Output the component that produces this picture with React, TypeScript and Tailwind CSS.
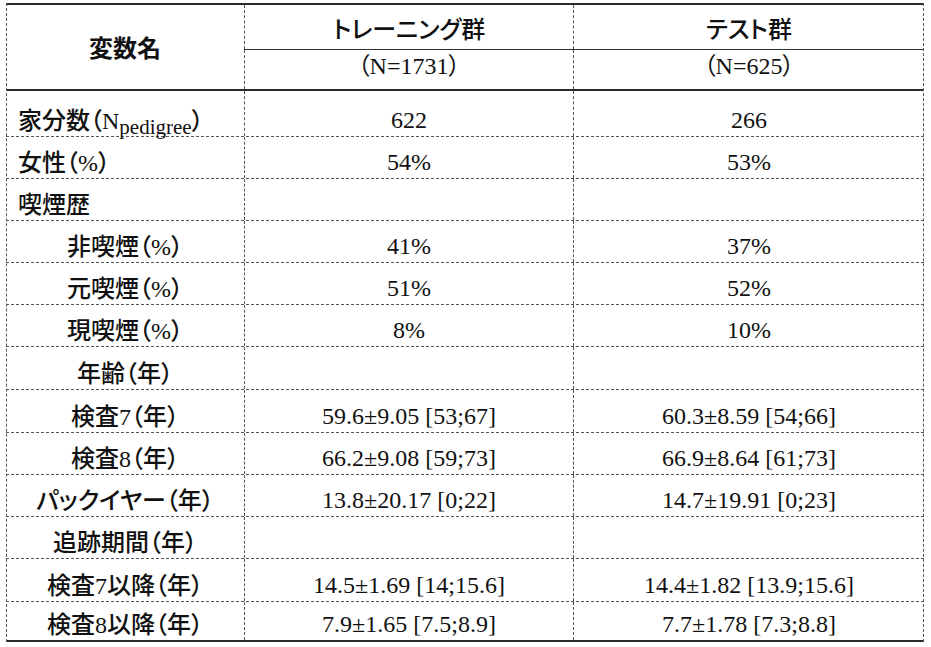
import React from 'react';

type Row = {
  label: React.ReactNode;
  train: string;
  test: string;
  center?: boolean;
  h: string;
};

const rows: Row[] = [
  { label: <>家分数（N<sub className="text-[21px]">pedigree</sub>）</>, train: '622', test: '266', h: 'h-[45px]' },
  { label: '女性（%）', train: '54%', test: '53%', h: 'h-[42px]' },
  { label: '喫煙歴', train: '', test: '', h: 'h-[42px]' },
  { label: '非喫煙（%）', train: '41%', test: '37%', center: true, h: 'h-[42px]' },
  { label: '元喫煙（%）', train: '51%', test: '52%', center: true, h: 'h-[42px]' },
  { label: '現喫煙（%）', train: '8%', test: '10%', center: true, h: 'h-[42px]' },
  { label: '年齢（年）', train: '', test: '', center: true, h: 'h-[43px]' },
  { label: '検査7（年）', train: '59.6±9.05 [53;67]', test: '60.3±8.59 [54;66]', center: true, h: 'h-[43px]' },
  { label: '検査8（年）', train: '66.2±9.08 [59;73]', test: '66.9±8.64 [61;73]', center: true, h: 'h-[42px]' },
  { label: 'パックイヤー（年）', train: '13.8±20.17 [0;22]', test: '14.7±19.91 [0;23]', center: true, h: 'h-[42px]' },
  { label: '追跡期間（年）', train: '', test: '', center: true, h: 'h-[42px]' },
  { label: '検査7以降（年）', train: '14.5±1.69 [14;15.6]', test: '14.4±1.82 [13.9;15.6]', center: true, h: 'h-[43px]' },
  { label: '検査8以降（年）', train: '7.9±1.65 [7.5;8.9]', test: '7.7±1.78 [7.3;8.8]', center: true, h: 'h-[39px]' },
];

const App: React.FC = () => {
  return (
    <div
      className="w-[931px] h-[647px] bg-white pt-[3px] pl-[6px] text-[#111] text-[24px] leading-none [font-feature-settings:'palt']"
      style={{ fontFamily: '"Liberation Serif", "Noto Sans CJK JP", serif' }}
    >
      <div className="w-[918px] border-t-2 border-b-2 border-[#2a2a2a] relative">
        {/* dashed outer sides */}
        <div className="absolute -top-[2px] -bottom-[2px] left-0 border-l border-dashed border-[#555]" />
        <div className="absolute -top-[2px] -bottom-[2px] right-0 border-r border-dashed border-[#555]" />

        {/* header */}
        <div className="flex border-b-2 border-[#2a2a2a]">
          <div className="w-[238px] h-[84px] flex items-center justify-center pt-[4px] font-bold">変数名</div>
          <div className="flex-1 flex flex-col">
            <div className="grid grid-cols-[329px_1fr] h-[44px]">
              <div className="border-l border-dashed border-[#555] flex items-end justify-center pb-[7px] font-medium">トレーニング群</div>
              <div className="border-l border-dashed border-[#555] flex items-end justify-center pb-[7px] font-medium">テスト群</div>
            </div>
            <div className="grid grid-cols-[329px_1fr] h-[40px] border-t-[1.5px] border-[#333]">
              <div className="border-l border-dashed border-[#555] flex items-end justify-center pb-[11px]">（N=1731）</div>
              <div className="border-l border-dashed border-[#555] flex items-end justify-center pb-[11px]">（N=625）</div>
            </div>
          </div>
        </div>

        {/* body */}
        {rows.map((r, i) => (
          <div
            key={i}
            className={`grid grid-cols-[238px_329px_1fr] ${r.h} ${i > 0 ? 'border-t border-dashed border-[#555]' : ''}`}
          >
            <div className={`flex items-end pb-[3px] font-medium ${r.center ? 'justify-center' : 'pl-[12px]'}`}>
              <span>{r.label}</span>
            </div>
            <div className="border-l border-dashed border-[#555] flex items-end justify-center pb-[4px]">{r.train}</div>
            <div className="border-l border-dashed border-[#555] flex items-end justify-center pb-[4px]">{r.test}</div>
          </div>
        ))}
      </div>
    </div>
  );
};

export default App;
